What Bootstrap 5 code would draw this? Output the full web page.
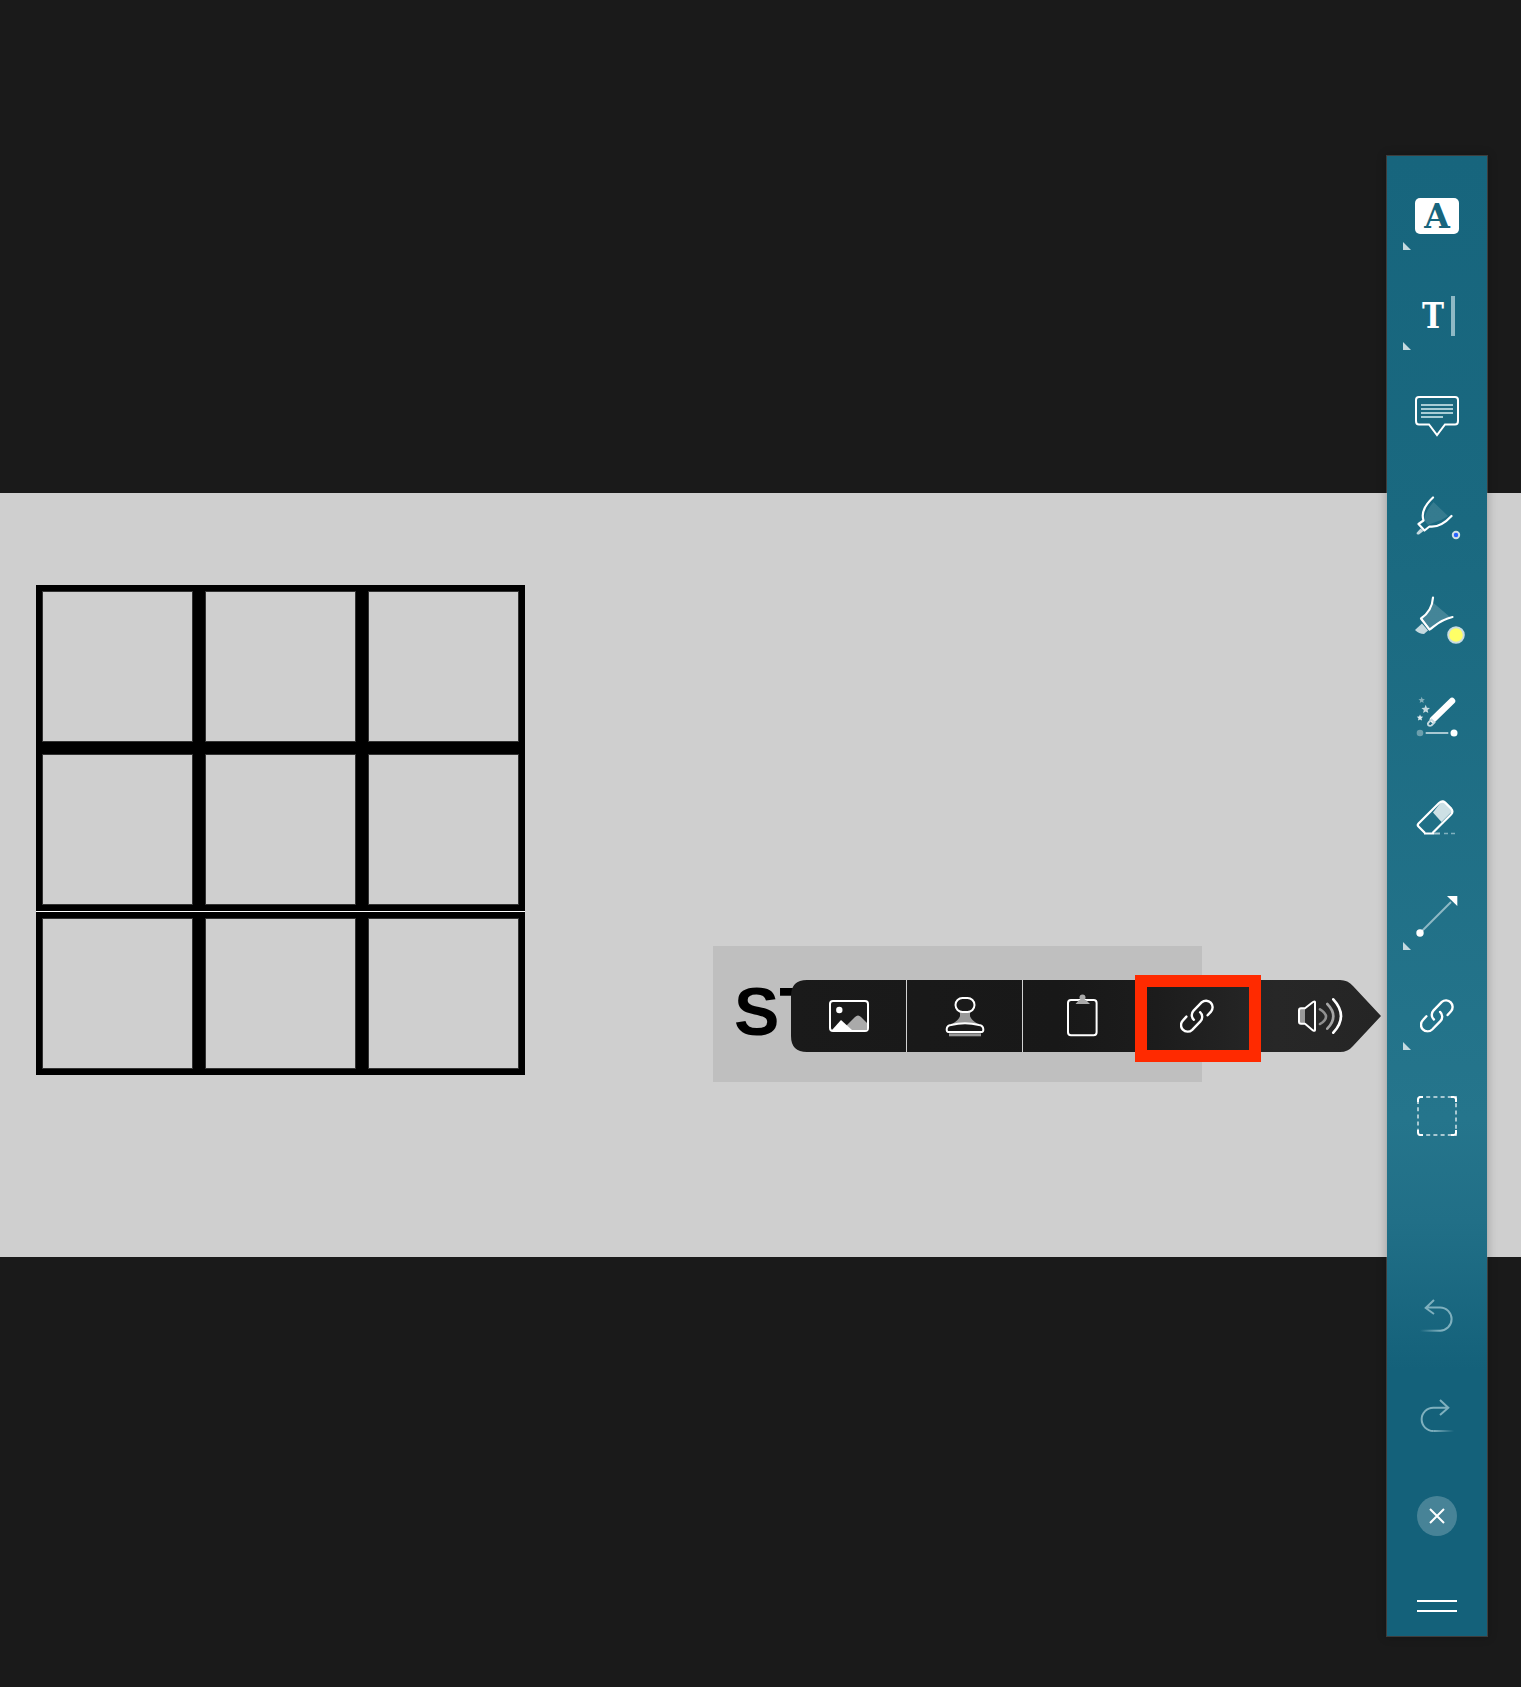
<!DOCTYPE html>
<html lang="en">
<head>
    <meta charset="UTF-8">
    <meta name="viewport" content="width=device-width, initial-scale=1.0">
    <title>Annotate</title>
    <link href="https://cdn.jsdelivr.net/npm/bootstrap@5.3.0/dist/css/bootstrap.min.css" rel="stylesheet">
    <style>
        body { background: #1a1a1a; margin: 0; position: relative; height: 1687px; overflow: hidden; }
        .page-band { margin-top: 493px; height: 764px; background: #cfcfcf; padding: 92px 0 0 36px; }

        /* 3x3 grid */
        .tile-board { display: grid; grid-template-columns: repeat(3, 163px); width: 489px; flex: none; }
        .tile { height: 163px; border: 6px solid #000; box-shadow: inset 0 0 0 1px #333; background: #cfcfcf; }
        .tile-gap { grid-column: 1 / -1; height: 1px; background: #fff; }

        .text-box { flex: none; width: 489px; height: 136px; margin: 361px 0 0 188px; padding: 0 0 6px 21px; background: #bfbfbf; color: #000; font: 700 68px/1 "Liberation Sans", Arial, sans-serif; }

        /* floating insert toolbar */
        .insert-wrap { position: absolute; left: 791px; top: 980px; width: 590px; height: 72px; }
        .insert-bar { height: 72px; background: linear-gradient(90deg, #1a1a1a 0%, #181818 45%, #1c1c1c 62%, #272727 82%, #252525 100%); clip-path: path("M16 0 H549 Q557 0 562 6 L590 36 L562 66 Q557 72 549 72 H16 Q0 72 0 56 V16 Q0 0 16 0 Z"); }
        .insert-cell { flex: none; width: 116px; height: 72px; border-right: 1px solid #d2d2d2; }
        .insert-cell.cell-last { width: 126px; border-right: 0; }
        .insert-cell svg { display: block; }
        .red-mark { position: absolute; left: 344px; top: -5px; width: 126px; height: 87px; border: 12px solid #ff2a00; }

        /* side tools */
        .tool-rail { position: absolute; left: 1386px; top: 155px; width: 102px; height: 1482px; border: 1px solid rgba(128, 128, 128, .35); background-clip: padding-box; background-image: linear-gradient(180deg, #17657d 0%, #1a6980 25%, #25758c 65%, #216f87 72%, #14617a 82%, #14617a 100%); box-shadow: 0 0 9px rgba(0, 0, 0, .22); padding-top: 10px; }
        .rail-item { height: 100px; flex: none; }
        .rail-item.rail-end { height: 70px; }
        .rail-item svg { display: block; }
        .glyph-a { font: 700 33px "DejaVu Serif", "Liberation Serif", serif; fill: #17657d; }
        .glyph-t { font: 700 36px "DejaVu Serif", "Liberation Serif", serif; fill: #fff; }
    </style>
</head>
<body>

<svg width="0" height="0" class="position-absolute">
    <defs>
        <symbol id="chain" viewBox="0 0 34 34">
            <path d="M27.6 16.3 L31 12.6 A6.6 6.6 0 0 0 21.8 3.2 L13.6 11.6 A6.4 6.4 0 0 0 13.9 20.8" fill="none" stroke="#fff" stroke-width="2.4" stroke-linecap="round"/>
            <path d="M6.4 17.6 L3 21.3 A6.6 6.6 0 0 0 12.2 30.8 L20.4 22.4 A6.4 6.4 0 0 0 20.1 13.2" fill="none" stroke="#fff" stroke-width="2.4" stroke-linecap="round"/>
        </symbol>
        <linearGradient id="fadeLeft" gradientUnits="userSpaceOnUse" x1="33" y1="0" x2="53" y2="0">
            <stop offset="0" stop-color="#7fb0be" stop-opacity="0"/>
            <stop offset="1" stop-color="#7fb0be"/>
        </linearGradient>
        <linearGradient id="fadeRight" gradientUnits="userSpaceOnUse" x1="46" y1="0" x2="67" y2="0">
            <stop offset="0" stop-color="#7fb0be"/>
            <stop offset="1" stop-color="#7fb0be" stop-opacity="0"/>
        </linearGradient>
    </defs>
</svg>

<div class="page-band d-flex align-items-start">
    <div class="tile-board">
        <div class="tile"></div><div class="tile"></div><div class="tile"></div>
        <div class="tile"></div><div class="tile"></div><div class="tile"></div>
        <div class="tile-gap"></div>
        <div class="tile"></div><div class="tile"></div><div class="tile"></div>
    </div>
    <div class="text-box d-flex align-items-center">ST</div>
</div>

<!-- Insert toolbar -->
<div class="insert-wrap">
    <div class="insert-bar d-flex">
        <div class="insert-cell">
            <svg width="115" height="72" viewBox="0 0 115 72">
                <rect x="39" y="21" width="38" height="30" rx="3" fill="none" stroke="#fff" stroke-width="2"/>
                <circle cx="48.3" cy="30" r="3.2" fill="#fff"/>
                <path d="M52 49 L64 37 Q67 34 70 37 L76 43 V50 H54 Z" fill="#aaa"/>
                <path d="M41 50 L50 40 L61 50 Z" fill="#fff"/>
            </svg>
        </div>
        <div class="insert-cell">
            <svg width="115" height="72" viewBox="0 0 115 72">
                <path d="M53 30 H63 V36 Q64 40 71 44 H45 Q52 40 53 36 Z" fill="#999"/>
                <rect x="48.5" y="18" width="19" height="14" rx="7" fill="#1a1a1a" stroke="#fff" stroke-width="2"/>
                <path d="M41.5 52 Q39.5 52 39.7 49 Q40 45.5 44 45 Q58 41.5 72 45 Q76 45.5 76.3 49 Q76.5 52 74.5 52 Z" fill="#1a1a1a" stroke="#fff" stroke-width="2"/>
                <rect x="42" y="53.3" width="32" height="3" fill="#999"/>
            </svg>
        </div>
        <div class="insert-cell">
            <svg width="115" height="72" viewBox="0 0 115 72">
                <rect x="45" y="20" width="28.6" height="35.3" rx="3" fill="none" stroke="#fff" stroke-width="2"/>
                <circle cx="59.5" cy="17.5" r="3" fill="#aaa"/>
                <path d="M52.5 24 H67 L63 20 H56 Z" fill="#aaa"/>
            </svg>
        </div>
        <div class="insert-cell">
            <svg width="115" height="72" viewBox="0 0 115 72">
                <use href="#chain" x="41" y="19" width="34" height="34"/>
            </svg>
        </div>
        <div class="insert-cell cell-last">
            <svg width="126" height="72" viewBox="0 0 126 72">
                <path d="M45 29 H50 V44 H45 Z" fill="#999"/>
                <path d="M60 22 L60 50 Q60 51.5 58 50.4 L50 43.8 H46 Q44 43.8 44 41.5 V30.5 Q44 28.2 46 28.2 H50 L58 22 Q60 20.8 60 22 Z" fill="none" stroke="#fff" stroke-width="2" stroke-linejoin="round"/>
                <path d="M65 29.3 Q77 36.6 65 44" fill="none" stroke="#8f8f8f" stroke-width="2.6" stroke-linecap="round"/>
                <path d="M72.3 24 Q84.3 36.3 72.3 48.7" fill="none" stroke="#a5a5a5" stroke-width="2.6" stroke-linecap="round"/>
                <path d="M78.3 19.3 Q93.7 36 78.3 52.7" fill="none" stroke="#fff" stroke-width="2.6" stroke-linecap="round"/>
            </svg>
        </div>
    </div>
    <div class="red-mark"></div>
</div>

<!-- Side tools -->
<div class="tool-rail d-flex flex-column">
    <div class="rail-item">
        <svg width="100" height="100" viewBox="0 0 100 100">
            <rect x="28" y="32" width="44" height="36" rx="5" fill="#fff"/>
            <text x="50" y="62" text-anchor="middle" class="glyph-a">A</text>
            <path d="M16 76 V84 H24 Z" fill="#c5dae0"/>
        </svg>
    </div>
    <div class="rail-item">
        <svg width="100" height="100" viewBox="0 0 100 100">
            <text x="35" y="62" textLength="22" lengthAdjust="spacingAndGlyphs" class="glyph-t">T</text>
            <rect x="64" y="30" width="4" height="40" fill="#8fb9c5"/>
            <path d="M16 76 V84 H24 Z" fill="#c5dae0"/>
        </svg>
    </div>
    <div class="rail-item">
        <svg width="100" height="100" viewBox="0 0 100 100">
            <path d="M32 31 H68 Q71 31 71 34 V55 Q71 58.5 68 58.5 H58 L50 69 L42 58.5 H32 Q29 58.5 29 55 V34 Q29 31 32 31 Z" fill="none" stroke="#fff" stroke-width="2"/>
            <path d="M34 39 H66 M34 43 H66 M34 47 H66 M34 51 H56" stroke="#a8cdd6" stroke-width="2"/>
        </svg>
    </div>
    <div class="rail-item">
        <svg width="100" height="100" viewBox="0 0 100 100">
            <path d="M46.5 36 L61 50 Q54 55 46 57 L41 59 L37 54 Q38 46 46.5 36 Z" fill="#fff" opacity=".12"/>
            <path d="M29.5 67 L33.5 62.5 L36.5 65 L32 68.5 Q29.5 69 29.5 67 Z" fill="#c5dae0"/>
            <path d="M46 31.5 C38 39 34 47 36.5 54.5 L31.5 58 L37.5 64.5 L42.5 60.5 C50 61.5 58 57 64.5 50" fill="none" stroke="#fff" stroke-width="2.2" stroke-linecap="round" stroke-linejoin="round"/>
            <circle cx="69" cy="69" r="3.2" fill="#2a62ff" stroke="#cfe0e5" stroke-width="2"/>
        </svg>
    </div>
    <div class="rail-item">
        <svg width="100" height="100" viewBox="0 0 100 100">
            <path d="M46.5 37 L63 51 Q54 53 47 59 L43 62 L35.5 52.5 Q43 47 46.5 37 Z" fill="#fff" opacity=".18"/>
            <path d="M28 64 L35 57.5 L41 64.5 L37 68 Q32 68 28 64 Z" fill="#c5dae0"/>
            <path d="M46 31.5 C45.5 40 42 47 34 52.5 L42.5 63.5 C47 61 52 54 65.5 51" fill="none" stroke="#fff" stroke-width="2.2" stroke-linecap="round" stroke-linejoin="round"/>
            <circle cx="69" cy="69" r="7.8" fill="#ffff66" stroke="#c8dce2" stroke-width="2"/>
        </svg>
    </div>
    <div class="rail-item">
        <svg width="100" height="100" viewBox="0 0 100 100">
            <path d="M46 53.5 L65 35" stroke="#fff" stroke-width="6.5" stroke-linecap="round"/>
            <path d="M41.5 56.5 L44.5 53.5 L47.5 56.5 L44.5 59.5 Q42.5 60.5 41 58.8 Q40.5 57.5 41.5 56.5 Z" fill="none" stroke="#c5dae0" stroke-width="1.8"/>
            <path d="M34.7 30.8 L35.6 33 L37.9 33.2 L36.1 34.7 L36.7 37 L34.7 35.7 L32.7 37 L33.3 34.7 L31.5 33.2 L33.8 33 Z" fill="#fff" opacity=".45"/>
            <path d="M38.7 38.8 L39.9 41.7 L43 42 L40.6 44 L41.3 47 L38.7 45.4 L36.1 47 L36.8 44 L34.4 42 L37.5 41.7 Z" fill="#c5dae0"/>
            <path d="M33 48.5 L33.9 50.6 L36.2 50.8 L34.5 52.3 L35 54.6 L33 53.4 L31 54.6 L31.5 52.3 L29.8 50.8 L32.1 50.6 Z" fill="#e3eef1"/>
            <circle cx="33" cy="67" r="3.3" fill="#6c9fad"/>
            <path d="M38.7 67 H61.3" stroke="#a8c8d2" stroke-width="2"/>
            <circle cx="67" cy="67" r="3.5" fill="#fff"/>
        </svg>
    </div>
    <div class="rail-item">
        <svg width="100" height="100" viewBox="0 0 100 100">
            <path d="M46 46.5 L54.5 35.5 Q56.5 33.5 58.5 35.5 L64.5 41.5 Q66.5 44 64.5 46 L54.5 56 Z" fill="#cde0e5"/>
            <path d="M38 67 L31.5 60.5 Q30 59 31.5 57.5 L52 37 Q55.5 34 58.5 37 L64 42.5 Q66.8 45.5 64 48.5 L45.5 67" fill="none" stroke="#fff" stroke-width="2.2"/>
            <path d="M37 67.5 H47" stroke="#fff" stroke-width="2"/>
            <path d="M47 67.5 H53" stroke="#a8c8d2" stroke-width="2"/>
            <path d="M57 67.5 H69" stroke="#7fb0be" stroke-width="1.6" stroke-dasharray="4 3"/>
        </svg>
    </div>
    <div class="rail-item">
        <svg width="100" height="100" viewBox="0 0 100 100">
            <path d="M33 67 L64 36" stroke="#8fb9c5" stroke-width="2"/>
            <circle cx="33" cy="67" r="3.7" fill="#fff"/>
            <path d="M60 30 H70.3 V40 Z" fill="#fff"/>
            <path d="M16 76 V84 H24 Z" fill="#c5dae0"/>
        </svg>
    </div>
    <div class="rail-item">
        <svg width="100" height="100" viewBox="0 0 100 100">
            <use href="#chain" x="33" y="32.7" width="34" height="34"/>
            <path d="M16 76 V84 H24 Z" fill="#c5dae0"/>
        </svg>
    </div>
    <div class="rail-item">
        <svg width="100" height="100" viewBox="0 0 100 100">
            <rect x="31" y="31" width="38" height="38" fill="none" stroke="#a8c8d2" stroke-width="2" stroke-dasharray="4 3.2" stroke-dashoffset="-1"/>
            <path d="M31 36 V33.5 Q31 31 33.5 31 H36 M64 31 H66.5 Q69 31 69 33.5 V36 M69 64 V66.5 Q69 69 66.5 69 H64 M36 69 H33.5 Q31 69 31 66.5 V64" fill="none" stroke="#fff" stroke-width="2"/>
        </svg>
    </div>
    <div class="rail-item"></div>
    <div class="rail-item">
        <svg width="100" height="100" viewBox="0 0 100 100">
            <path d="M47 34 L38.7 42 L47 48 M39.5 41.5 H53 A11.5 11.5 0 0 1 53 64.7" fill="none" stroke="#7fb0be" stroke-width="2"/>
            <path d="M53 64.7 H33" fill="none" stroke="url(#fadeLeft)" stroke-width="2"/>
        </svg>
    </div>
    <div class="rail-item">
        <svg width="100" height="100" viewBox="0 0 100 100">
            <path d="M53 34 L61.3 41.7 L53 49 M60.5 41.7 H46.3 A11.6 11.6 0 0 0 46.3 65" fill="none" stroke="#7fb0be" stroke-width="2"/>
            <path d="M46.3 65 H67" fill="none" stroke="url(#fadeRight)" stroke-width="2"/>
        </svg>
    </div>
    <div class="rail-item">
        <svg width="100" height="100" viewBox="0 0 100 100">
            <circle cx="50" cy="50" r="20" fill="#fff" fill-opacity=".22"/>
            <path d="M43 43 L57 57 M57 43 L43 57" stroke="#fff" stroke-width="2"/>
        </svg>
    </div>
    <div class="rail-item rail-end">
        <svg width="100" height="70" viewBox="0 0 100 70">
            <path d="M30 35 H70 M30 45 H70" stroke="#fff" stroke-width="2"/>
        </svg>
    </div>
</div>

<script src="https://cdn.jsdelivr.net/npm/bootstrap@5.3.0/dist/js/bootstrap.bundle.min.js"></script>
</body>
</html>
